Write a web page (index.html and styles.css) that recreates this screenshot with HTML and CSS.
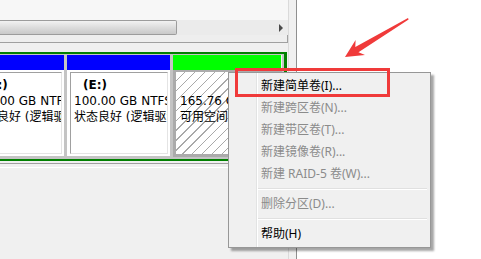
FILE: index.html
```html
<!DOCTYPE html>
<html lang="zh-CN">
<head>
    <meta charset="UTF-8">
    <title>磁盘管理</title>
    <link rel="stylesheet" href="styles.css">
</head>
<body>
    <div class="window">
        <div class="pane">
            <div class="top-strip"></div>
            <div class="hscroll">
                <div class="hscroll-thumb"></div>
                <div class="hscroll-track"><span class="arrow-right"></span></div>
            </div>
            <div class="hscroll-foot"></div>

            <div class="disk">
                <div class="part part-logical part-first">
                    <div class="part-head"></div>
                    <div class="part-body">
                        <div class="vol">
                            <div class="vol-label">(D:)</div>
                            <div>100.00 GB NTFS</div>
                            <div>状态良好 (逻辑驱动器)</div>
                        </div>
                    </div>
                </div>
                <div class="part part-logical part-second">
                    <div class="part-head"></div>
                    <div class="part-body">
                        <div class="vol">
                            <div class="vol-label">(E:)</div>
                            <div>100.00 GB NTFS</div>
                            <div>状态良好 (逻辑驱动器)</div>
                        </div>
                    </div>
                </div>
                <div class="part part-free">
                    <div class="part-head"></div>
                    <div class="part-body">
                        <div class="vol vol-hatch">
                            <div>&nbsp;</div>
                            <div>165.76 GB</div>
                            <div>可用空间</div>
                        </div>
                    </div>
                </div>
            </div>

            <div class="below">
                <div class="below-light"></div>
            </div>
        </div>
        <div class="edge"></div>
    </div>

    <div class="menu">
        <div class="menu-item">新建简单卷(I)...</div>
        <div class="menu-item disabled">新建跨区卷(N)...</div>
        <div class="menu-item disabled">新建带区卷(T)...</div>
        <div class="menu-item disabled">新建镜像卷(R)...</div>
        <div class="menu-item disabled">新建 RAID-5 卷(W)...</div>
        <div class="menu-sep"></div>
        <div class="menu-item disabled">删除分区(D)...</div>
        <div class="menu-sep"></div>
        <div class="menu-item">帮助(H)</div>
    </div>

    <!-- annotation: red box + arrow -->
    <div class="mark-box"></div>
    <svg class="mark-arrow" width="481" height="259" viewBox="0 0 481 259">
        <polygon points="345,57 355.6,39.9 355.3,47 408,18 408.6,19.6 358.5,52.2 365,55.1" fill="#f03a3a"/>
    </svg>
</body>
</html>
```

FILE: styles.css
```css
body {
    margin: 0;
    background-color: #ffffff;
    font-family: "Noto Sans", "Noto Sans CJK SC", sans-serif;
    font-size: 12px;
    color: #000;
    width: 481px;
    height: 259px;
    overflow: hidden;
    position: relative;
}
.window {
    display: flex;
    height: 259px;
    width: 297px;
}
.pane {
    width: 288px;
    background-color: #f0f0f0;
    overflow: hidden;
}
.edge {
    width: 7px;
    background-color: #f0f0f0;
    border-left: 1px solid #dadada;
    border-right: 1px solid #8f8f8f;
}
.top-strip {
    height: 20px;
    background-color: #f7f7f7;
}
.hscroll {
    display: flex;
    height: 15px;
    background-color: #ebebeb;
}
.hscroll-thumb {
    width: 176px;
    border: 1px solid #9c9c9c;
    border-left: none;
    border-radius: 0 2px 2px 0;
    background: linear-gradient(#f2f2f2, #dcdcdc 50%, #c9c9c9);
}
.hscroll-track {
    flex: 1;
    display: flex;
    align-items: center;
    justify-content: flex-end;
    padding-right: 5px;
}
.arrow-right {
    width: 0;
    height: 0;
    border-top: 4px solid transparent;
    border-bottom: 4px solid transparent;
    border-left: 4px solid #4a4a4a;
}
.hscroll-foot {
    height: 7px;
    background-color: #eeeeee;
    border-bottom: 1px solid #a0a0a0;
    border-right: 1px solid #a0a0a0;
}
.disk {
    display: flex;
    gap: 3px;
    margin-top: 9px;
    margin-left: -34px;
    width: 316px;
    padding: 1px 2px 2px 0;
    border-top: 2px solid #008000;
    border-bottom: 2px solid #008000;
    border-right: 3px solid #008000;
    background-color: #c4c4c4;
    font-family: "DejaVu Sans", "Noto Sans CJK SC", sans-serif;
}
.part {
    display: flex;
    flex-direction: column;
}
.part-first { width: 98px; }
.part-second { width: 103px; }
.part-free { width: 109px; }
.part-head {
    height: 15px;
}
.part-logical .part-head {
    background-color: #0000ff;
}
.part-free .part-head {
    background-color: #00ff00;
    border-right: 1px solid #e8f8e8;
}
.part-body {
    height: 82px;
    padding: 2px 2px 2px 3px;
    background-color: #ffffff;
}
.part-free .part-body {
    padding: 2px 3px 3px 3px;
    background-color: #ababab;
}
.vol {
    height: 100%;
    box-sizing: border-box;
    padding: 4px 0 0 3px;
    line-height: 16px;
    white-space: nowrap;
    overflow: hidden;
    border: 1px solid;
    border-color: #a0a0a0 #e4e4e4 #e4e4e4 #a0a0a0;
}
.vol-label {
    font-weight: bold;
    padding-left: 9px;
}
.vol-hatch {
    border: none;
    padding: 5px 0 0 4px;
    background: repeating-linear-gradient(135deg, #ffffff 0 6px, #a9a9a9 6px 7px);
}
.below {
    margin-top: 2px;
    border-top: 1px solid #a0a0a0;
    padding-top: 3px;
}
.below-light {
    border-top: 1px solid #ffffff;
}
.menu {
    position: absolute;
    left: 228px;
    top: 72px;
    width: 197px;
    padding: 2px;
    border: 1px solid #979797;
    background: linear-gradient(to right, #f0f0f0 27px, #e2e3e3 27px 28px, #ffffff 28px 29px, #f0f0f0 29px);
    box-shadow: 3px 3px 2px rgba(0, 0, 0, 0.35);
}
.menu-item {
    height: 22px;
    line-height: 22px;
    padding-left: 30px;
    white-space: nowrap;
}
.menu-item.disabled {
    color: #8b8b8b;
}
.menu-sep {
    height: 8px;
    margin-left: 27px;
    margin-right: 1px;
    background: linear-gradient(#f0f0f0 3px, #e0e0e0 3px 4px, #ffffff 4px 5px, #f0f0f0 5px);
}
.mark-box {
    position: absolute;
    left: 235px;
    top: 68px;
    width: 149px;
    height: 23px;
    border: 3px solid #f03a3a;
}
.mark-arrow {
    position: absolute;
    left: 0;
    top: 0;
    pointer-events: none;
}
```
